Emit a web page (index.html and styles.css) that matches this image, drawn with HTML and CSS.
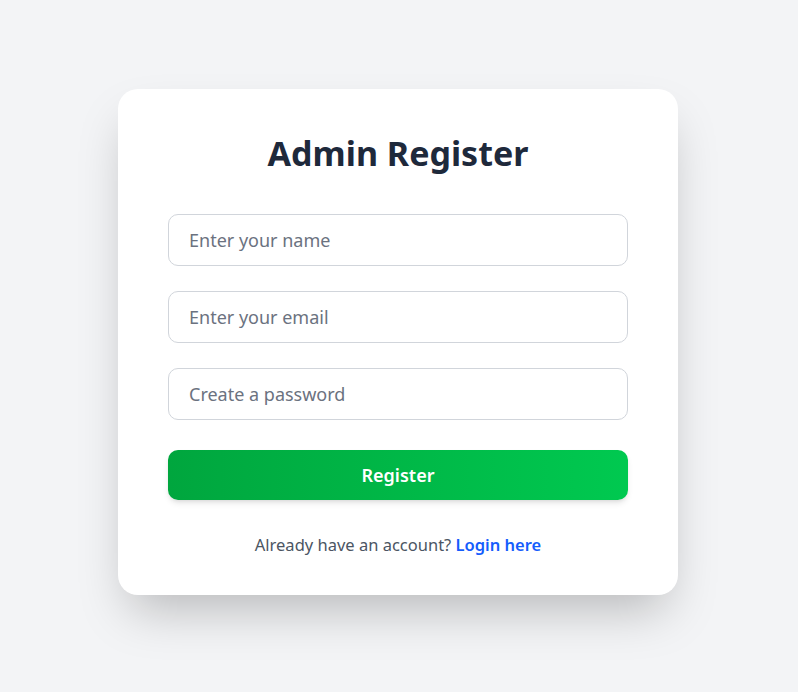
FILE: index.html
```html
<!DOCTYPE html>
<html lang="en">
<head>
<meta charset="utf-8">
<title>Admin Register</title>
<link rel="stylesheet" href="styles.css">
</head>
<body>
<main class="page">
  <form class="card">
    <h1 class="title">Admin Register</h1>
    <input class="field" type="text" placeholder="Enter your name">
    <input class="field" type="email" placeholder="Enter your email">
    <input class="field" type="password" placeholder="Create a password">
    <button class="btn" type="button">Register</button>
    <p class="foot">Already have an account? <a class="link" href="#">Login here</a></p>
  </form>
</main>
</body>
</html>
```
FILE: styles.css
```css
* { box-sizing: border-box; }
html, body { margin: 0; padding: 0; }
body {
  background: #f3f4f6;
  font-family: "Noto Sans", "Open Sans", sans-serif;
}
.page {
  min-height: 692px;
  display: flex;
  justify-content: center;
  align-items: flex-start;
  padding: 89px 2px 0 0;
}
.card {
  width: 560px;
  background: #fff;
  border-radius: 20px;
  padding: 44px 50px 39px;
  box-shadow: 0 25px 50px -12px rgba(0,0,0,0.25);
  display: flex;
  flex-direction: column;
}
.title {
  margin: 0 0 41px;
  text-align: center;
  font-size: 34px;
  line-height: 40px;
  font-weight: 700;
  color: #1e293b;
}
.field {
  height: 52px;
  border: 1px solid #d1d5db;
  border-radius: 10px;
  padding: 0 20px;
  font: inherit;
  font-size: 18px;
  color: #111827;
  margin-bottom: 25px;
  outline: none;
}
.field::placeholder { color: #6b7280; }
.field:last-of-type { margin-bottom: 30px; }
.btn {
  height: 50px;
  border: 0;
  border-radius: 10px;
  background: linear-gradient(to right, #00a63e, #00c950);
  color: #fff;
  font: inherit;
  font-size: 18px;
  font-weight: 600;
  box-shadow: 0 4px 6px -1px rgba(0,0,0,0.1), 0 2px 4px -2px rgba(0,0,0,0.1);
  cursor: pointer;
}
.foot {
  margin: 33px 0 0;
  text-align: center;
  font-size: 16.5px;
  color: #4b5563;
}
.link {
  color: #155dfc;
  font-weight: 600;
  text-decoration: none;
}
```
